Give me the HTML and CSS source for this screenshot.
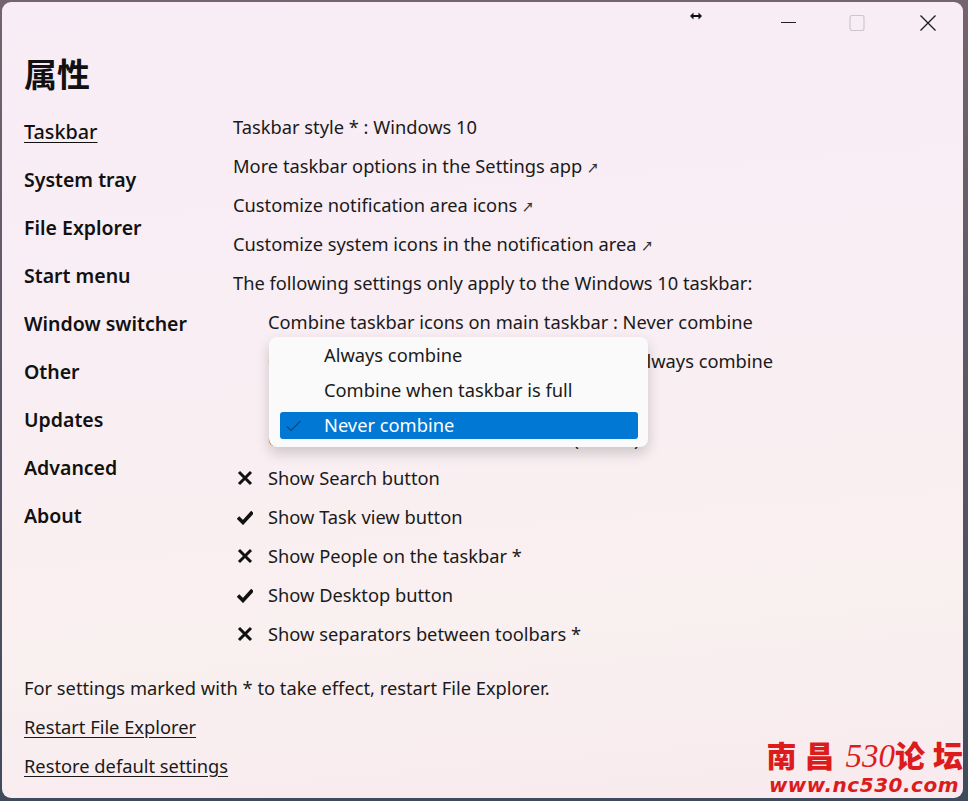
FILE: index.html
```html
<!DOCTYPE html>
<html lang="zh">
<head>
<meta charset="utf-8">
<title>属性</title>
<link rel="stylesheet" href="styles.css">
</head>
<body>
<div class="window">
  <header class="titlebar">
    <svg class="resize-cursor" width="12" height="8" viewBox="0 0 12 8"><path d="M0 4 3.500 .5V3h5V.5L12 4 8.500 7.500V5h-5v2.500Z" fill="#111"/></svg>
    <div class="caption">
      <svg class="cap cap-min" width="16" height="16" viewBox="0 0 16 16"><path d="M0 7.500H15" stroke="#222" stroke-width="1"/></svg>
      <svg class="cap" width="16" height="16" viewBox="0 0 16 16"><rect x="1" y=".5" width="14" height="15" rx="2" fill="none" stroke="#cfc6cc" stroke-width="1.200"/></svg>
      <svg class="cap" width="16" height="16" viewBox="0 0 16 16"><path d="M.5.500 15.500 15.500M15.500.500 .5 15.500" stroke="#1a1a1a" stroke-width="1.300"/></svg>
    </div>
  </header>
  <h1 class="title">属性</h1>
  <div class="columns">
    <nav class="sidebar">
      <a class="nav active">Taskbar</a>
      <a class="nav">System tray</a>
      <a class="nav">File Explorer</a>
      <a class="nav">Start menu</a>
      <a class="nav">Window switcher</a>
      <a class="nav">Other</a>
      <a class="nav">Updates</a>
      <a class="nav">Advanced</a>
      <a class="nav">About</a>
    </nav>
    <main class="settings">
      <div class="row">Taskbar style * : Windows 10</div>
      <div class="row">More taskbar options in the Settings app <span class="ext">↗</span></div>
      <div class="row">Customize notification area icons <span class="ext">↗</span></div>
      <div class="row">Customize system icons in the notification area <span class="ext">↗</span></div>
      <div class="row">The following settings only apply to the Windows 10 taskbar:</div>
      <div class="row sub">Combine taskbar icons on main taskbar : Never combine</div>
      <div class="row sub">Combine taskbar icons on other taskbars : Always combine</div>
      <div class="row sub">Position on screen : Default</div>
      <div class="row sub">Customize the taskbar button sizes (center)</div>
      <div class="row check"><svg class="mark" viewBox="0 0 16 16"><path d="M2 2 14 14M14 2 2 14" /></svg>Show Search button</div>
      <div class="row check"><svg class="mark mark-on" viewBox="0 0 16 16"><path d="M1 8.500 6 13.500 15.500 3" /></svg>Show Task view button</div>
      <div class="row check"><svg class="mark" viewBox="0 0 16 16"><path d="M2 2 14 14M14 2 2 14" /></svg>Show People on the taskbar *</div>
      <div class="row check"><svg class="mark mark-on" viewBox="0 0 16 16"><path d="M1 8.500 6 13.500 15.500 3" /></svg>Show Desktop button</div>
      <div class="row check"><svg class="mark" viewBox="0 0 16 16"><path d="M2 2 14 14M14 2 2 14" /></svg>Show separators between toolbars *</div>
      <div class="menu">
        <div class="menu-item">Always combine</div>
        <div class="menu-item">Combine when taskbar is full</div>
        <div class="menu-item selected"><svg class="tick" width="16" height="12" viewBox="0 0 16 12"><path d="M1 6.500 5 10.500 14.500 1" fill="none" stroke="#0e4a80" stroke-width="1.200"/></svg>Never combine</div>
      </div>
    </main>
  </div>
  <footer class="footer">
    <div class="row">For settings marked with * to take effect, restart File Explorer.</div>
    <div class="row"><a class="link">Restart File Explorer</a></div>
    <div class="row"><a class="link">Restore default settings</a></div>
  </footer>
  <div class="watermark">
    <div class="wm-top"><span class="wm-spaced">南昌</span><span class="wm-num">530</span><span>论</span><span class="wm-last">坛</span></div>
    <div class="wm-url">www.nc530.com</div>
  </div>
</div>
</body>
</html>
```
FILE: styles.css
```css
* { box-sizing: border-box; }
html, body { margin: 0; height: 100%; }
body {
  background: linear-gradient(#75636f, #3f4a5c);
  padding: 2px 5px 3px 2px;
  overflow: hidden;
}
.window {
  position: relative;
  height: 796px;
  border-radius: 9px;
  background: linear-gradient(175deg, #f8edf6 0%, #f9eef3 45%, #f9f0f0 75%, #f8eaee 100%);
  font-family: "Noto Sans", "Noto Sans CJK SC", sans-serif;
  font-size: 18.3px;
  color: #1a1a1a;
  padding: 0 22px;
  display: flex;
  flex-direction: column;
  overflow: hidden;
}
.titlebar { height: 48px; flex: none; display: flex; justify-content: flex-end; }
.resize-cursor { position: absolute; left: 688px; top: 10px; }
.caption { display: flex; gap: 55px; padding: 13px 4px 0 0; height: 30px; margin-right: 1px; }
.cap { display: block; }
.cap-min { margin-right: -3px; }
.title {
  margin: 0;
  height: 46px;
  font-family: "Noto Sans CJK SC", sans-serif;
  font-size: 33px;
  line-height: 46px;
  font-weight: 700;
  color: #111;
}
.columns { display: flex; position: relative; margin-top: 12px; flex: none; }
.sidebar { width: 209px; flex: none; display: flex; flex-direction: column; }
.nav {
  height: 48px;
  line-height: 48px;
  font-weight: 600;
  font-size: 19.500px;
  color: #111;
}
.nav.active { font-weight: 500; font-size: 19.800px; text-decoration: underline; text-underline-offset: 3px; }
.settings { position: relative; flex: 1; margin-top: -1px; }
.row { height: 39px; line-height: 39px; white-space: nowrap; }
.sub { padding-left: 35px; }
.check { padding-left: 35px; position: relative; }
.mark {
  position: absolute;
  left: 4px;
  top: 12px;
  width: 16px;
  height: 16px;
  fill: none;
  stroke: #111;
  stroke-width: 3;
}
.mark-on { stroke-width: 3.600; }
.ext { font-size: 12px; font-weight: 600; color: #333; }
.menu {
  position: absolute;
  left: 36px;
  top: 230px;
  width: 379px;
  height: 110px;
  background: #fafafa;
  border-radius: 8px;
  box-shadow: 0 6px 14px rgba(0, 0, 0, .18);
  padding: 2px 10px 1px 11px;
  z-index: 2;
}
.menu-item {
  height: 35px;
  line-height: 31px;
  padding-left: 44px;
  border-radius: 3px;
  position: relative;
}
.menu-item.selected { height: 27px; line-height: 25px; margin-top: 3px; background: #0078d4; color: #fff; }
.tick { position: absolute; left: 6px; top: 8px; }
.footer { margin-top: 15px; }
.link { text-decoration: underline; text-underline-offset: 3px; }
.watermark {
  position: absolute;
  right: 0;
  bottom: 1px;
  width: 220px;
  color: #dc1c1c;
  font-weight: 900;
  text-align: right;
}
.wm-top { font-family: "Noto Sans CJK SC", sans-serif; font-size: 30px; line-height: 34px; white-space: nowrap; }
.wm-spaced { letter-spacing: 8px; }
.wm-last { margin-left: 8px; }
.wm-num { font-family: "Liberation Serif", serif; font-style: italic; font-weight: 400; font-size: 33px; margin-left: 3px; }
.wm-url { font-family: "DejaVu Sans", sans-serif; font-style: italic; font-weight: 700; font-size: 20px; letter-spacing: .5px; line-height: 24px; padding-right: 4px; }
```
